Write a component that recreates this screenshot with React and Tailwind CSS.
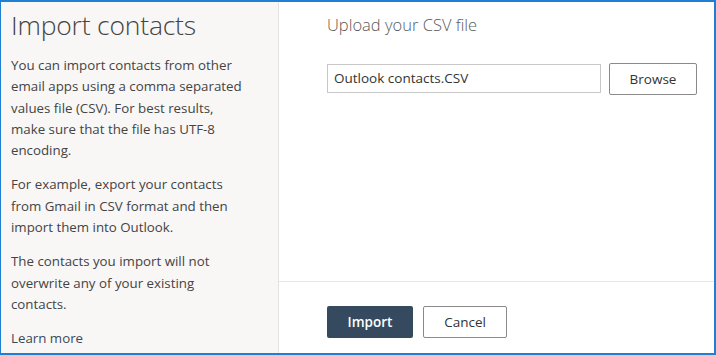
export default function App() {
  return (
    <div
      className="w-[716px] h-[355px] flex border-t-2 border-l border-r-2 border-b-2 border-[#1e7fd3] bg-white text-[#333]"
      style={{ fontFamily: '"Segoe UI", "Open Sans", sans-serif' }}
    >
      <aside className="w-[278px] shrink-0 bg-[#f8f7f6] border-r border-[#e3e3e3] pl-[10px]">
        <h1 className="text-[26.5px] font-light leading-[36px] mt-[5px] text-[#444] tracking-[-0.2px]">Import contacts</h1>
        <div className="mt-[12px] w-[236px] text-[13.3px] leading-[21.3px] text-[#444]">
          <p>You can import contacts from other email apps using a comma separated values file (CSV). For best results, make sure that the file has UTF-8 encoding.</p>
          <p className="mt-[13px]">For example, export your contacts from Gmail in CSV format and then import them into Outlook.</p>
          <p className="mt-[13px]">The contacts you import will not overwrite any of your existing contacts.</p>
          <a className="block mt-[13px] text-[#38495c]">Learn more</a>
        </div>
      </aside>
      <main className="flex-1 flex flex-col">
        <div className="flex-1 pl-[48px] pr-[17px]">
          <h2 className="mt-[11px] text-[16.5px] font-light text-[#5a5a5a] leading-[24px]">Upload your CSV file</h2>
          <div className="mt-[26px] flex items-start gap-[8px]">
            <div className="mt-[1px] w-[274px] h-[29px] border border-[#c8c8c8] px-[6px] flex items-center text-[13.5px] text-[#333]">
              Outlook contacts.CSV
            </div>
            <button className="w-[88px] h-[32px] border border-[#8a8a8a] rounded-[2px] text-[13.5px] text-[#333] bg-white">
              Browse
            </button>
          </div>
        </div>
        <div className="h-[72px] border-t border-[#e6e6e6] pl-[48px] pt-[24px] flex gap-[10px]">
          <button className="w-[86px] h-[32px] rounded-[2px] bg-[#364a5f] text-white text-[13.5px] font-semibold">
            Import
          </button>
          <button className="w-[84px] h-[32px] rounded-[2px] border border-[#8a8a8a] bg-white text-[13.5px] text-[#333]">
            Cancel
          </button>
        </div>
      </main>
    </div>
  )
}
